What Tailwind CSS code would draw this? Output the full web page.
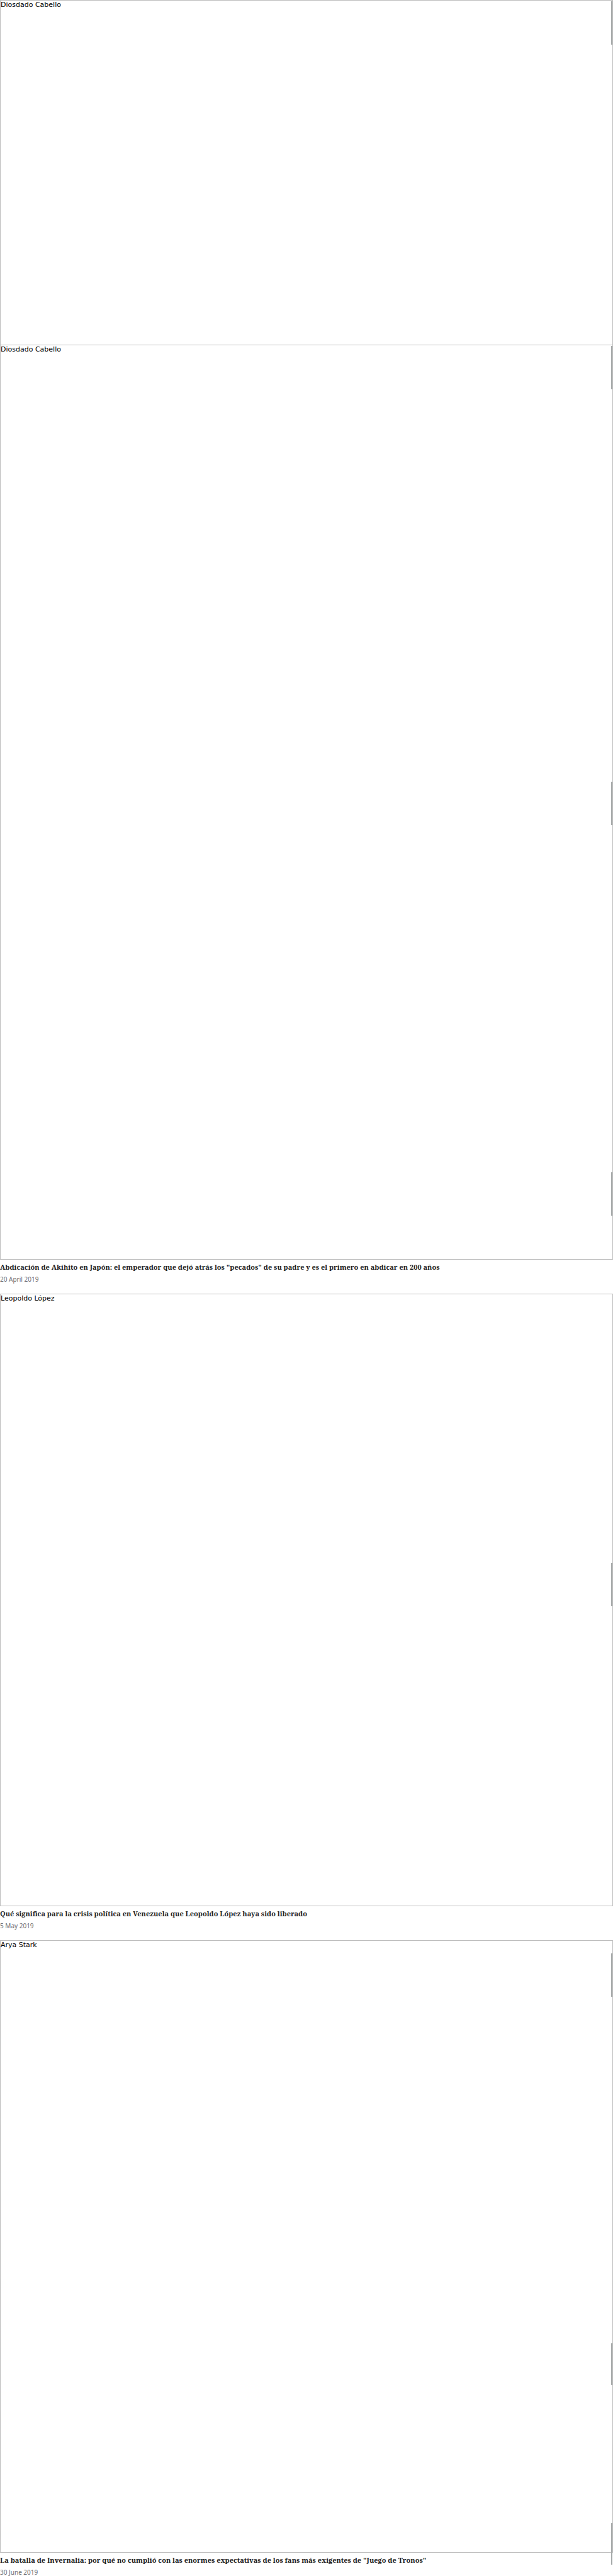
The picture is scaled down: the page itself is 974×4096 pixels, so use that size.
<!DOCTYPE html>
<html lang="es">
<head>
<meta charset="utf-8">
<meta name="viewport" content="width=device-width, initial-scale=1">
<title>Noticias</title>
<script src="https://cdn.jsdelivr.net/npm/@tailwindcss/browser@4"></script>
</head>
<body class="bg-white">
<main class="relative overflow-hidden font-['DejaVu_Sans','Noto_Sans',sans-serif] text-[11px] leading-[14px] text-black">
  <div class="aspect-[974/548] border border-b-0 border-[#bdbdbd]">Diosdado Cabello</div>
  <article>
    <div class="aspect-[974/1455] border border-[#bdbdbd]">Diosdado Cabello</div>
    <div class="h-[54px] pt-1">
      <h3 class="font-['Noto_Serif','Liberation_Serif',serif] text-[11px] leading-4 font-bold text-[#222222]">Abdicación de Akihito en Japón: el emperador que dejó atrás los "pecados" de su padre y es el primero en abdicar en 200 años</h3>
      <time datetime="2019-04-20" class="mt-1 block font-['Noto_Sans',sans-serif] text-[10px] leading-[14px] text-[#6e6e73]">20 April 2019</time>
    </div>
  </article>
  <article>
    <div class="aspect-square border border-[#bdbdbd]">Leopoldo López</div>
    <div class="h-[54px] pt-1">
      <h3 class="font-['Noto_Serif','Liberation_Serif',serif] text-[11px] leading-4 font-bold text-[#222222]">Qué significa para la crisis política en Venezuela que Leopoldo López haya sido liberado</h3>
      <time datetime="2019-05-05" class="mt-1 block font-['Noto_Sans',sans-serif] text-[10px] leading-[14px] text-[#6e6e73]">5 May 2019</time>
    </div>
  </article>
  <article>
    <div class="aspect-square border border-[#bdbdbd]">Arya Stark</div>
    <div class="pt-1">
      <h3 class="font-['Noto_Serif','Liberation_Serif',serif] text-[11px] leading-4 font-bold text-[#222222]">La batalla de Invernalia: por qué no cumplió con las enormes expectativas de los fans más exigentes de "Juego de Tronos"</h3>
      <time datetime="2019-06-30" class="mt-1 block font-['Noto_Sans',sans-serif] text-[10px] leading-[14px] text-[#6e6e73]">30 June 2019</time>
    </div>
  </article>
  <!-- Scroll thumbs along the right edge -->
  <div aria-hidden="true">
    <span class="absolute right-px top-[2px] h-[69px] w-[2px] bg-[#a6aaaa]"></span>
    <span class="absolute right-px top-[550px] h-[69px] w-[2px] bg-[#a6aaaa]"></span>
    <span class="absolute right-px top-[1243px] h-[69px] w-[2px] bg-[#a6aaaa]"></span>
    <span class="absolute right-px top-[1864px] h-[69px] w-[2px] bg-[#a6aaaa]"></span>
    <span class="absolute right-px top-[2485px] h-[69px] w-[2px] bg-[#a6aaaa]"></span>
    <span class="absolute right-px top-[3106px] h-[69px] w-[2px] bg-[#a6aaaa]"></span>
    <span class="absolute right-px top-[3726px] h-[66px] w-[2px] bg-[#a6aaaa]"></span>
    <span class="absolute right-px top-[4012px] h-[66px] w-[2px] bg-[#a6aaaa]"></span>
  </div>
</main>
</body>
</html>
